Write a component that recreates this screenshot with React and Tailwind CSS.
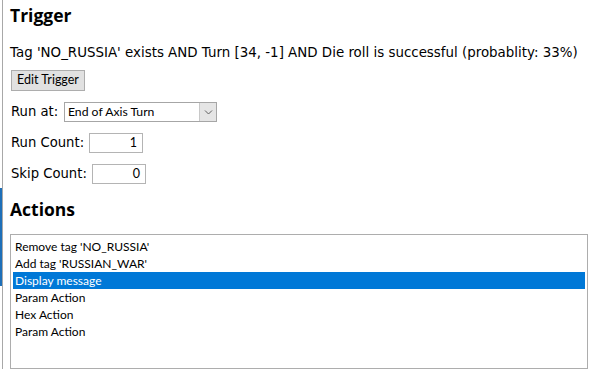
import React from 'react';

const body = { fontFamily: '"DejaVu Sans", Verdana, sans-serif' };
const ui = { fontFamily: 'Lato, "Liberation Sans", Arial, sans-serif' };
const head = { fontFamily: '"Open Sans", "Noto Sans", sans-serif' };

const actions = [
  "Remove tag 'NO_RUSSIA'",
  "Add tag 'RUSSIAN_WAR'",
  'Display message',
  'Param Action',
  'Hex Action',
  'Param Action',
];

const NumberBox = ({ value, width }) => (
  <div
    className={`h-[20px] ${width} border border-[#b4b4b4] bg-white flex items-center justify-end pr-[5px] text-[12.5px] text-black`}
    style={ui}
  >
    {value}
  </div>
);

export default function App() {
  const selected = 2;

  return (
    <div className="w-[594px] h-[369px] overflow-hidden bg-white flex text-black">
      {/* edge of the neighbouring panel */}
      <div className="w-[2px] flex flex-col shrink-0">
        <div className="h-[188px] bg-white" />
        <div className="h-[98px] bg-[#1e6fb8]" />
        <div className="flex-1 bg-white" />
      </div>
      <div className="w-px bg-[#a8a8a8] shrink-0" />

      <div className="flex-1 flex flex-col pl-[7px] pr-[6px] pt-[4px]">
        <div className="h-[23px] flex items-center text-[17.5px] font-bold" style={head}>
          Trigger
        </div>

        <div className="mt-[16px] h-[20px] flex items-center text-[13.4px] whitespace-nowrap" style={body}>
          Tag 'NO_RUSSIA' exists AND Turn [34, -1] AND Die roll is successful (probablity: 33%)
        </div>

        <div className="mt-[7px] flex">
          <button
            className="h-[21px] w-[74px] ml-px border border-[#adadad] bg-[#e1e1e1] text-[12.5px] flex items-center justify-center"
            style={ui}
          >
            Edit Trigger
          </button>
        </div>

        <div className="mt-[11px] h-[20px] flex items-center" style={body}>
          <span className="text-[13.2px] w-[54px] pl-px">Run at:</span>
          <div className="h-[20px] w-[153px] border border-[#a6a6a6] bg-white flex">
            <div className="flex-1 flex items-center pl-[3px] text-[12.2px]" style={ui}>
              End of Axis Turn
            </div>
            <div className="w-[17px] bg-[#e5e5e5] border-l border-[#c8c8c8] flex items-center justify-center">
              <svg width="9" height="6" viewBox="0 0 9 6" fill="none">
                <path d="M1 1.5 L4.5 5 L8 1.5" stroke="#606060" strokeWidth="1" />
              </svg>
            </div>
          </div>
        </div>

        <div className="mt-[11px] h-[20px] flex items-center" style={body}>
          <span className="text-[13.2px] w-[79px] pl-px">Run Count:</span>
          <NumberBox value="1" width="w-[54px]" />
        </div>

        <div className="mt-[11px] h-[20px] flex items-center" style={body}>
          <span className="text-[13.2px] w-[82px] pl-px">Skip Count:</span>
          <NumberBox value="0" width="w-[54px]" />
        </div>

        <div className="mt-[14px] h-[23px] flex items-center text-[17.5px] font-bold" style={head}>
          Actions
        </div>

        <div className="mt-[13px] h-[150px] w-[578px] border border-[#adadad] bg-white pt-[3px] px-[2px]" style={ui}>
          {actions.map((a, i) => (
            <div
              key={i}
              className={`h-[17px] flex items-center pl-[2px] text-[12px] whitespace-nowrap ${
                i === selected ? 'bg-[#0078d7] text-white' : 'text-black'
              }`}
            >
              {a}
            </div>
          ))}
        </div>
      </div>
    </div>
  );
}
